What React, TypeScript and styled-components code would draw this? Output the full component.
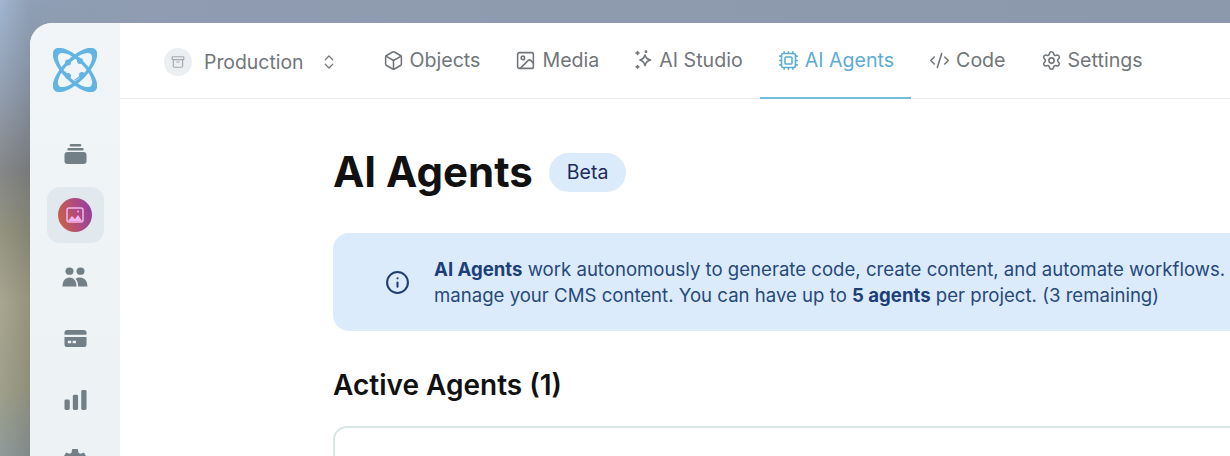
import React from "react";
import styled, { createGlobalStyle } from "styled-components";
import { Archive, Box, ChevronsUpDown, CodeXml, Cpu, Image, Info, Settings } from "lucide-react";
import { MdSettings } from "react-icons/md";

const GlobalStyle = createGlobalStyle`
  html, body {
    margin: 0;
    height: 100%;
    overflow: hidden;
  }
  body {
    font-family: "Inter", "Liberation Sans", sans-serif;
    background:
      linear-gradient(90deg, rgba(140, 152, 171, 0) 0, #8f9cb1 140px, #8c98ab 100%) 0 0 / 100% 40px no-repeat,
      linear-gradient(90deg, rgba(60, 60, 60, 0) 0, rgba(60, 60, 60, 0.18) 30px),
      linear-gradient(180deg, #a2b6d2 0, #93a0b3 90px, #858788 170px, #93937f 230px, #a8a68f 300px, #a0a08a 390px, #8f9a9a 456px);
  }
`;

const Frame = styled.div`
  display: flex;
  width: 1300px;
  height: 520px;
  margin: 23px 0 0 30px;
  background: #fff;
  border-radius: 22px 0 0 0;
  overflow: hidden;
`;

const Sidebar = styled.aside`
  flex: 0 0 90px;
  display: flex;
  flex-direction: column;
  align-items: center;
  padding-top: 25px;
  background: linear-gradient(180deg, #f1f5f8 0, #ecf1f4 100%);
`;

const Logo = styled.svg`
  width: 44px;
  height: 44px;
  margin-bottom: 33.5px;
`;

const SideItem = styled.div<{ $active?: boolean }>`
  flex: 0 0 56px;
  width: 57px;
  margin-bottom: 5.5px;
  display: flex;
  align-items: center;
  justify-content: center;
  border-radius: 13px;
  background: ${(p) => (p.$active ? "#e1e8ee" : "transparent")};
  color: #737f86;
`;

const GalleryBadge = styled.div`
  width: 34px;
  height: 34px;
  border-radius: 50%;
  display: flex;
  align-items: center;
  justify-content: center;
  background: linear-gradient(75deg, #c9673f 0%, #b44d78 50%, #8c3fa8 100%);
  color: #f3b5ee;
`;

const Main = styled.main`
  flex: 1;
  display: flex;
  flex-direction: column;
`;

const TopBar = styled.nav`
  flex: 0 0 76px;
  box-sizing: border-box;
  display: flex;
  align-items: stretch;
  padding-left: 44px;
  border-bottom: 1px solid #ebeef0;
`;

const ProjectPicker = styled.div`
  display: flex;
  align-items: center;
  margin-right: 27px;
  padding-top: 3px;
  color: #71767a;
  font-size: 19.4px;
`;

const ProjectIcon = styled.div`
  width: 28px;
  height: 28px;
  margin-right: 12px;
  border-radius: 50%;
  display: flex;
  align-items: center;
  justify-content: center;
  background: #eceff1;
  color: #a3a9ad;
`;

const PickerChevron = styled(ChevronsUpDown)`
  margin-left: 16px;
  color: #6f7579;
`;

const Tab = styled.div<{ $active?: boolean }>`
  display: flex;
  align-items: center;
  gap: 6px;
  padding: 0 17px 0 18px;
  margin-bottom: -1px;
  font-size: 19.6px;
  color: ${(p) => (p.$active ? "#5cacd4" : "#71767a")};
  border-bottom: 2px solid ${(p) => (p.$active ? "#74bcdc" : "transparent")};
`;

const Content = styled.section`
  padding: 50px 0 0 213px;
`;

const TitleRow = styled.div`
  display: flex;
  align-items: center;
  gap: 16px;
  height: 46px;
`;

const Title = styled.h1`
  margin: 0;
  font-size: 42px;
  line-height: 46px;
  font-weight: 700;
  color: #111;
`;

const BetaPill = styled.span`
  display: flex;
  align-items: center;
  height: 39px;
  padding: 0 18px;
  border-radius: 20px;
  font-size: 19.5px;
  color: #1c2a5e;
  background: #dcebfb;
`;

const Notice = styled.div`
  display: flex;
  align-items: center;
  height: 98px;
  margin-top: 38px;
  padding-left: 52px;
  border-radius: 16px 0 0 16px;
  background: #dcebfb;
  color: #26497a;
`;

const NoticeIcon = styled(Info)`
  flex: none;
  margin-right: 24px;
  color: #1f3f72;
`;

const NoticeText = styled.p`
  margin: 0;
  font-size: 18.6px;
  line-height: 26px;
  white-space: nowrap;
  strong {
    font-weight: 700;
    color: #1d3f78;
  }
`;

const SectionTitle = styled.h2`
  margin: 37px 0 0;
  font-size: 28px;
  line-height: 34px;
  font-weight: 600;
  color: #111;
`;

const AgentCard = styled.div`
  height: 200px;
  margin-top: 24px;
  border: 2px solid #d8e6e6;
  border-radius: 14px 0 0 0;
  background: #fff;
`;

const loop = "M-29 0a29 12 0 1 0 58 0a29 12 0 1 0-58 0zM-22.500 0a22.500 8.800 0 1 0 45 0a22.500 8.800 0 1 0-45 0z";

const AtomLogo = () => (
  <Logo viewBox="0 0 44 44" fill="none">
    <g fill="#62b5e2" fillRule="evenodd">
      <path d={loop} transform="translate(22 22) rotate(45)" />
      <path d={loop} transform="translate(22 22) rotate(-45)" />
      <circle cx="15" cy="14.600" r="3" />
      <circle cx="27" cy="13" r="3" />
      <circle cx="15" cy="28" r="3" />
      <circle cx="29" cy="27" r="3" />
    </g>
    <g stroke="#62b5e2" strokeWidth="1.400" strokeLinecap="round">
      <path d="M15 14.600 L23 9.500" />
      <path d="M27 13 L26 10" />
      <path d="M15 28 L12 24" />
      <path d="M29 27 L22 32" />
    </g>
  </Logo>
);

const StackIcon = () => (
  <svg width="23" height="20" viewBox="0 0 24 20" fill="currentColor" preserveAspectRatio="none">
    <rect x="6" y="0" width="12" height="2.600" rx="1.300" />
    <rect x="3.500" y="4" width="17" height="2.600" rx="1.300" />
    <rect x="0.500" y="8" width="23" height="12" rx="3" />
  </svg>
);

const PeopleIcon = () => (
  <svg width="26" height="20" viewBox="0 0 26 22" fill="currentColor" preserveAspectRatio="none">
    <circle cx="7.500" cy="4.600" r="4" />
    <circle cx="18.500" cy="4.600" r="4" />
    <path d="M0.500 21.500c0-6 2.600-10 7-10s7 4 7 10z" />
    <path d="M16.200 21.500c0-3.400-.8-6.400-2.600-8.600 1.200-.9 2.800-1.400 4.600-1.400 4.400 0 7.300 4 7.300 10z" />
  </svg>
);

const CardIcon = () => (
  <svg width="23" height="17" viewBox="0 0 24 18" fill="currentColor" preserveAspectRatio="none">
    <path d="M0.500 5V3a3 3 0 0 1 3-3h17a3 3 0 0 1 3 3v2z" />
    <path
      fillRule="evenodd"
      d="M0.500 7.500h23V15a3 3 0 0 1-3 3h-17a3 3 0 0 1-3-3zM4 11.500v2.500h3.500v-2.500zM9 11.500v2.500h3.500v-2.500z"
    />
  </svg>
);

const BarsIcon = () => (
  <svg width="23" height="20" viewBox="0 0 24 21" fill="currentColor" preserveAspectRatio="none">
    <rect x="0.500" y="10" width="5.500" height="11" rx="1.500" />
    <rect x="9.200" y="5" width="5.500" height="16" rx="1.500" />
    <rect x="18" y="0" width="5.500" height="21" rx="1.500" />
  </svg>
);

const GalleryIcon = () => (
  <svg width="18" height="16" viewBox="0 0 18 16" fill="none">
    <rect x="1" y="1" width="16" height="14" rx="2" stroke="currentColor" strokeWidth="1.500" />
    <path d="M2 14l4-5 3 3 3-4 4 6z" fill="#f3b5ee" />
    <circle cx="12" cy="4.500" r="1" fill="#f3b5ee" />
  </svg>
);

const StudioIcon = () => (
  <svg width="19" height="20" viewBox="0 0 19 20" fill="none" stroke="currentColor" strokeWidth="1.700" strokeLinejoin="round">
    <path d="M11 5c.8 3 2 4.300 5.500 5-3.500.8-4.700 2-5.500 5.500-.8-3.500-2-4.700-5-5.500 3-.7 4.200-2 5-5z" />
    <path d="M3.500 1.500v3M2 3h3" strokeLinecap="round" />
    <path d="M3.500 15.500v2.500M2.200 16.800h2.600" strokeLinecap="round" />
    <circle cx="12" cy="1.800" r=".6" />
  </svg>
);

const tabs = [
  { label: "Objects", icon: <Box size={21} strokeWidth={1.8} /> },
  { label: "Media", icon: <Image size={21} strokeWidth={1.8} /> },
  { label: "AI Studio", icon: <StudioIcon /> },
  { label: "AI Agents", icon: <Cpu size={21} strokeWidth={1.8} />, active: true },
  { label: "Code", icon: <CodeXml size={21} strokeWidth={1.8} /> },
  { label: "Settings", icon: <Settings size={21} strokeWidth={1.8} /> },
];

const App = () => (
  <>
    <GlobalStyle />
    <Frame>
      <Sidebar>
        <AtomLogo />
        <SideItem>
          <StackIcon />
        </SideItem>
        <SideItem $active>
          <GalleryBadge>
            <GalleryIcon />
          </GalleryBadge>
        </SideItem>
        <SideItem>
          <PeopleIcon />
        </SideItem>
        <SideItem>
          <CardIcon />
        </SideItem>
        <SideItem>
          <BarsIcon />
        </SideItem>
        <SideItem>
          <MdSettings size={30} />
        </SideItem>
      </Sidebar>
      <Main>
        <TopBar>
          <ProjectPicker>
            <ProjectIcon>
              <Archive size={14} />
            </ProjectIcon>
            Production
            <PickerChevron size={18} strokeWidth={1.6} />
          </ProjectPicker>
          {tabs.map((tab) => (
            <Tab key={tab.label} $active={tab.active}>
              {tab.icon}
              {tab.label}
            </Tab>
          ))}
        </TopBar>
        <Content>
          <TitleRow>
            <Title>AI Agents</Title>
            <BetaPill>Beta</BetaPill>
          </TitleRow>
          <Notice>
            <NoticeIcon size={25} strokeWidth={2} />
            <NoticeText>
              <strong>AI Agents</strong> work autonomously to generate code, create content, and automate workflows.
              <br />
              manage your CMS content. You can have up to <strong>5 agents</strong> per project. (3 remaining)
            </NoticeText>
          </Notice>
          <SectionTitle>Active Agents (1)</SectionTitle>
          <AgentCard />
        </Content>
      </Main>
    </Frame>
  </>
);

export default App;
